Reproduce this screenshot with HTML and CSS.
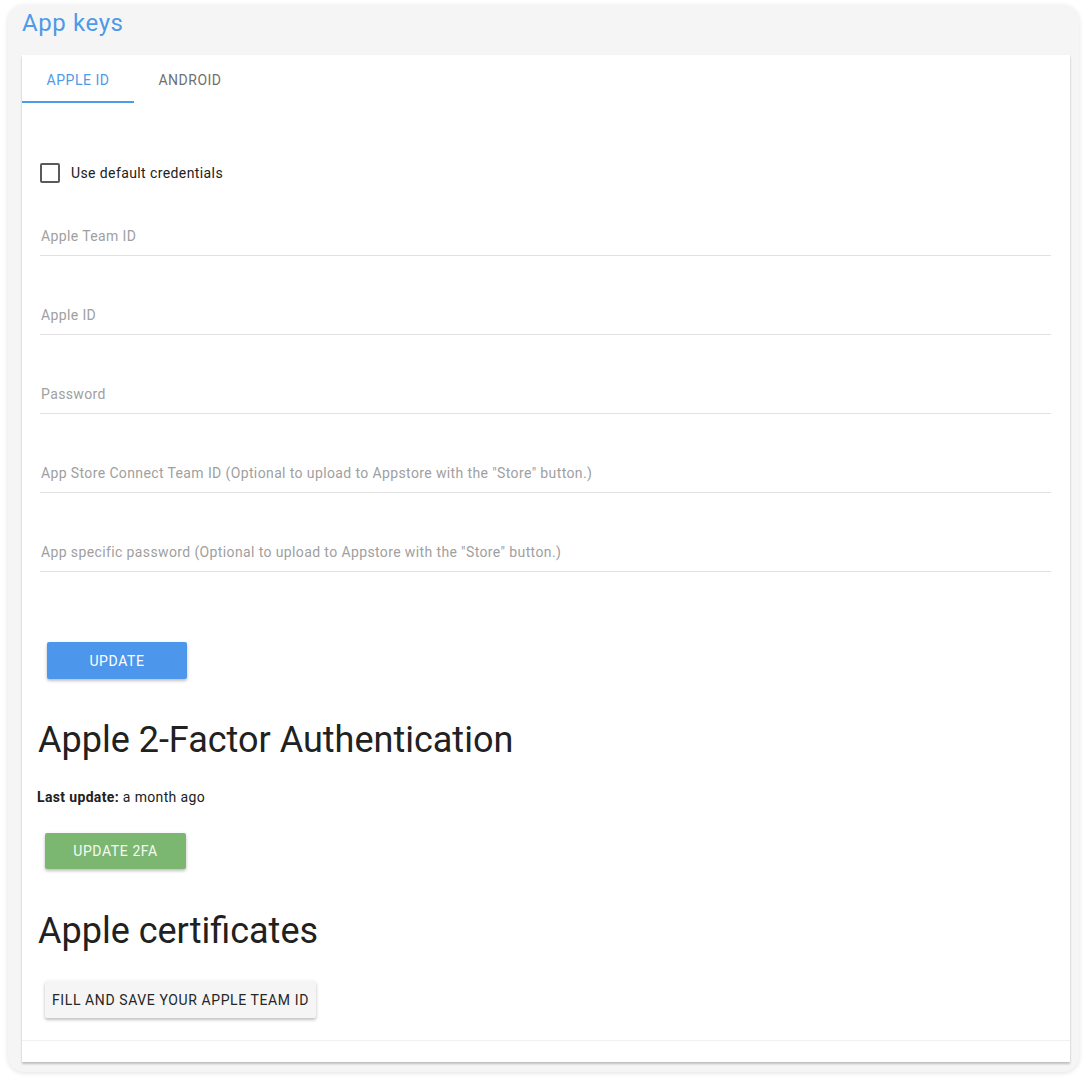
FILE: index.html
```html
<!DOCTYPE html>
<html lang="en">

<head>
    <meta charset="UTF-8">
    <meta name="viewport" content="width=device-width, initial-scale=1.0">
    <title>App keys</title>
    <link rel="stylesheet" href="styles.css">
</head>

<body>
    <div class="panel">
        <h2 class="panel-title">App keys</h2>

        <div class="card">
            <ul class="tabs">
                <li class="tab active">Apple ID</li>
                <li class="tab">Android</li>
            </ul>

            <div class="card-content">
                <label class="check-row">
                    <span class="check-box"></span>
                    <span>Use default credentials</span>
                </label>

                <div class="fields">
                    <div class="field"><span class="field-label">Apple Team ID</span></div>
                    <div class="field"><span class="field-label">Apple ID</span></div>
                    <div class="field"><span class="field-label">Password</span></div>
                    <div class="field"><span class="field-label">App Store Connect Team ID (Optional to upload to Appstore with the "Store" button.)</span></div>
                    <div class="field"><span class="field-label">App specific password (Optional to upload to Appstore with the "Store" button.)</span></div>
                </div>

                <button class="btn btn-blue btn-update">Update</button>

                <h3 class="section-title title-2fa">Apple 2-Factor Authentication</h3>
                <p class="last-update"><b>Last update:</b> a month ago</p>
                <button class="btn btn-green">Update 2FA</button>

                <h3 class="section-title title-certs">Apple certificates</h3>
                <button class="btn btn-light">Fill and save your Apple Team ID</button>
            </div>

            <div class="card-action"></div>
        </div>
    </div>
</body>

</html>
```

FILE: styles.css
```css
body {
    margin: 0;
    padding: 5px 8px 10px 8px;
    background: #fff;
    font-family: Roboto, "Liberation Sans", sans-serif;
    color: #212121;
}

.panel {
    background: #f5f5f5;
    border-radius: 16px;
    box-shadow: 0 1px 5px rgba(0, 0, 0, 0.12);
    padding: 0 9px 10px 14px;
}

.panel-title {
    margin: 0;
    height: 50px;
    padding-top: 4px;
    box-sizing: border-box;
    font-size: 24px;
    line-height: 28px;
    letter-spacing: 0.6px;
    font-weight: 400;
    color: #4d9ae9;
}

.card {
    background: #fff;
    box-shadow: 0 2px 2px rgba(0, 0, 0, 0.22), 0 0 1px rgba(0, 0, 0, 0.06);
}

.tabs {
    list-style: none;
    margin: 0;
    padding: 0;
    display: flex;
    height: 48px;
}

.tab {
    width: 112px;
    text-align: center;
    line-height: 50px;
    font-size: 14px;
    letter-spacing: 0.5px;
    text-transform: uppercase;
    color: #6f6f6f;
    box-sizing: border-box;
}

.tab.active {
    color: #4d9ae9;
    border-bottom: 2px solid #4d9ae9;
}

.card-content {
    padding: 0 19px 0 18px;
}

.check-row {
    display: flex;
    align-items: center;
    gap: 11px;
    margin-top: 60px;
    height: 20px;
    font-size: 14px;
    letter-spacing: 0.4px;
    color: #212121;
}

.check-box {
    width: 20px;
    height: 20px;
    box-sizing: border-box;
    border: 2px solid #5a5a5a;
    border-radius: 2px;
}

.fields {
    margin-top: -6px;
}

.field {
    padding: 49px 0 9px 1px;
    border-bottom: 1px solid #e2e2e2;
    font-size: 14px;
    line-height: 20px;
    letter-spacing: 0.38px;
    color: #a0a0a0;
}

.btn {
    display: block;
    border: none;
    border-radius: 2px;
    font-family: Roboto, "Liberation Sans", sans-serif;
    font-size: 14px;
    letter-spacing: 0.6px;
    text-transform: uppercase;
    box-shadow: 0 2px 3px rgba(0, 0, 0, 0.2), 0 1px 5px rgba(0, 0, 0, 0.08);
    cursor: pointer;
}

.btn-blue {
    background: #4c96ec;
    color: #fff;
    width: 140px;
    height: 37px;
}

.btn-update {
    margin: 70px 0 0 7px;
}

.btn-green {
    background: #7cb772;
    color: #f4fbf2;
    width: 141px;
    height: 36px;
    margin-left: 5px;
}

.btn-light {
    background: #f5f5f5;
    color: #262626;
    height: 37px;
    padding: 0 7px;
    margin-left: 5px;
}

.section-title {
    margin: 0;
    font-size: 36px;
    line-height: 40px;
    font-weight: 400;
    color: #212121;
    margin-left: -2px;
}

.title-2fa {
    margin-top: 41px;
}

.title-certs {
    margin-top: 42px;
    margin-bottom: 30px;
}

.last-update {
    margin: 27px 0 26px -3px;
    font-size: 14px;
    line-height: 20px;
    letter-spacing: 0.35px;
}

.card-action {
    margin-top: 22px;
    height: 21px;
    border-top: 1px solid #f1f1f1;
}
```
